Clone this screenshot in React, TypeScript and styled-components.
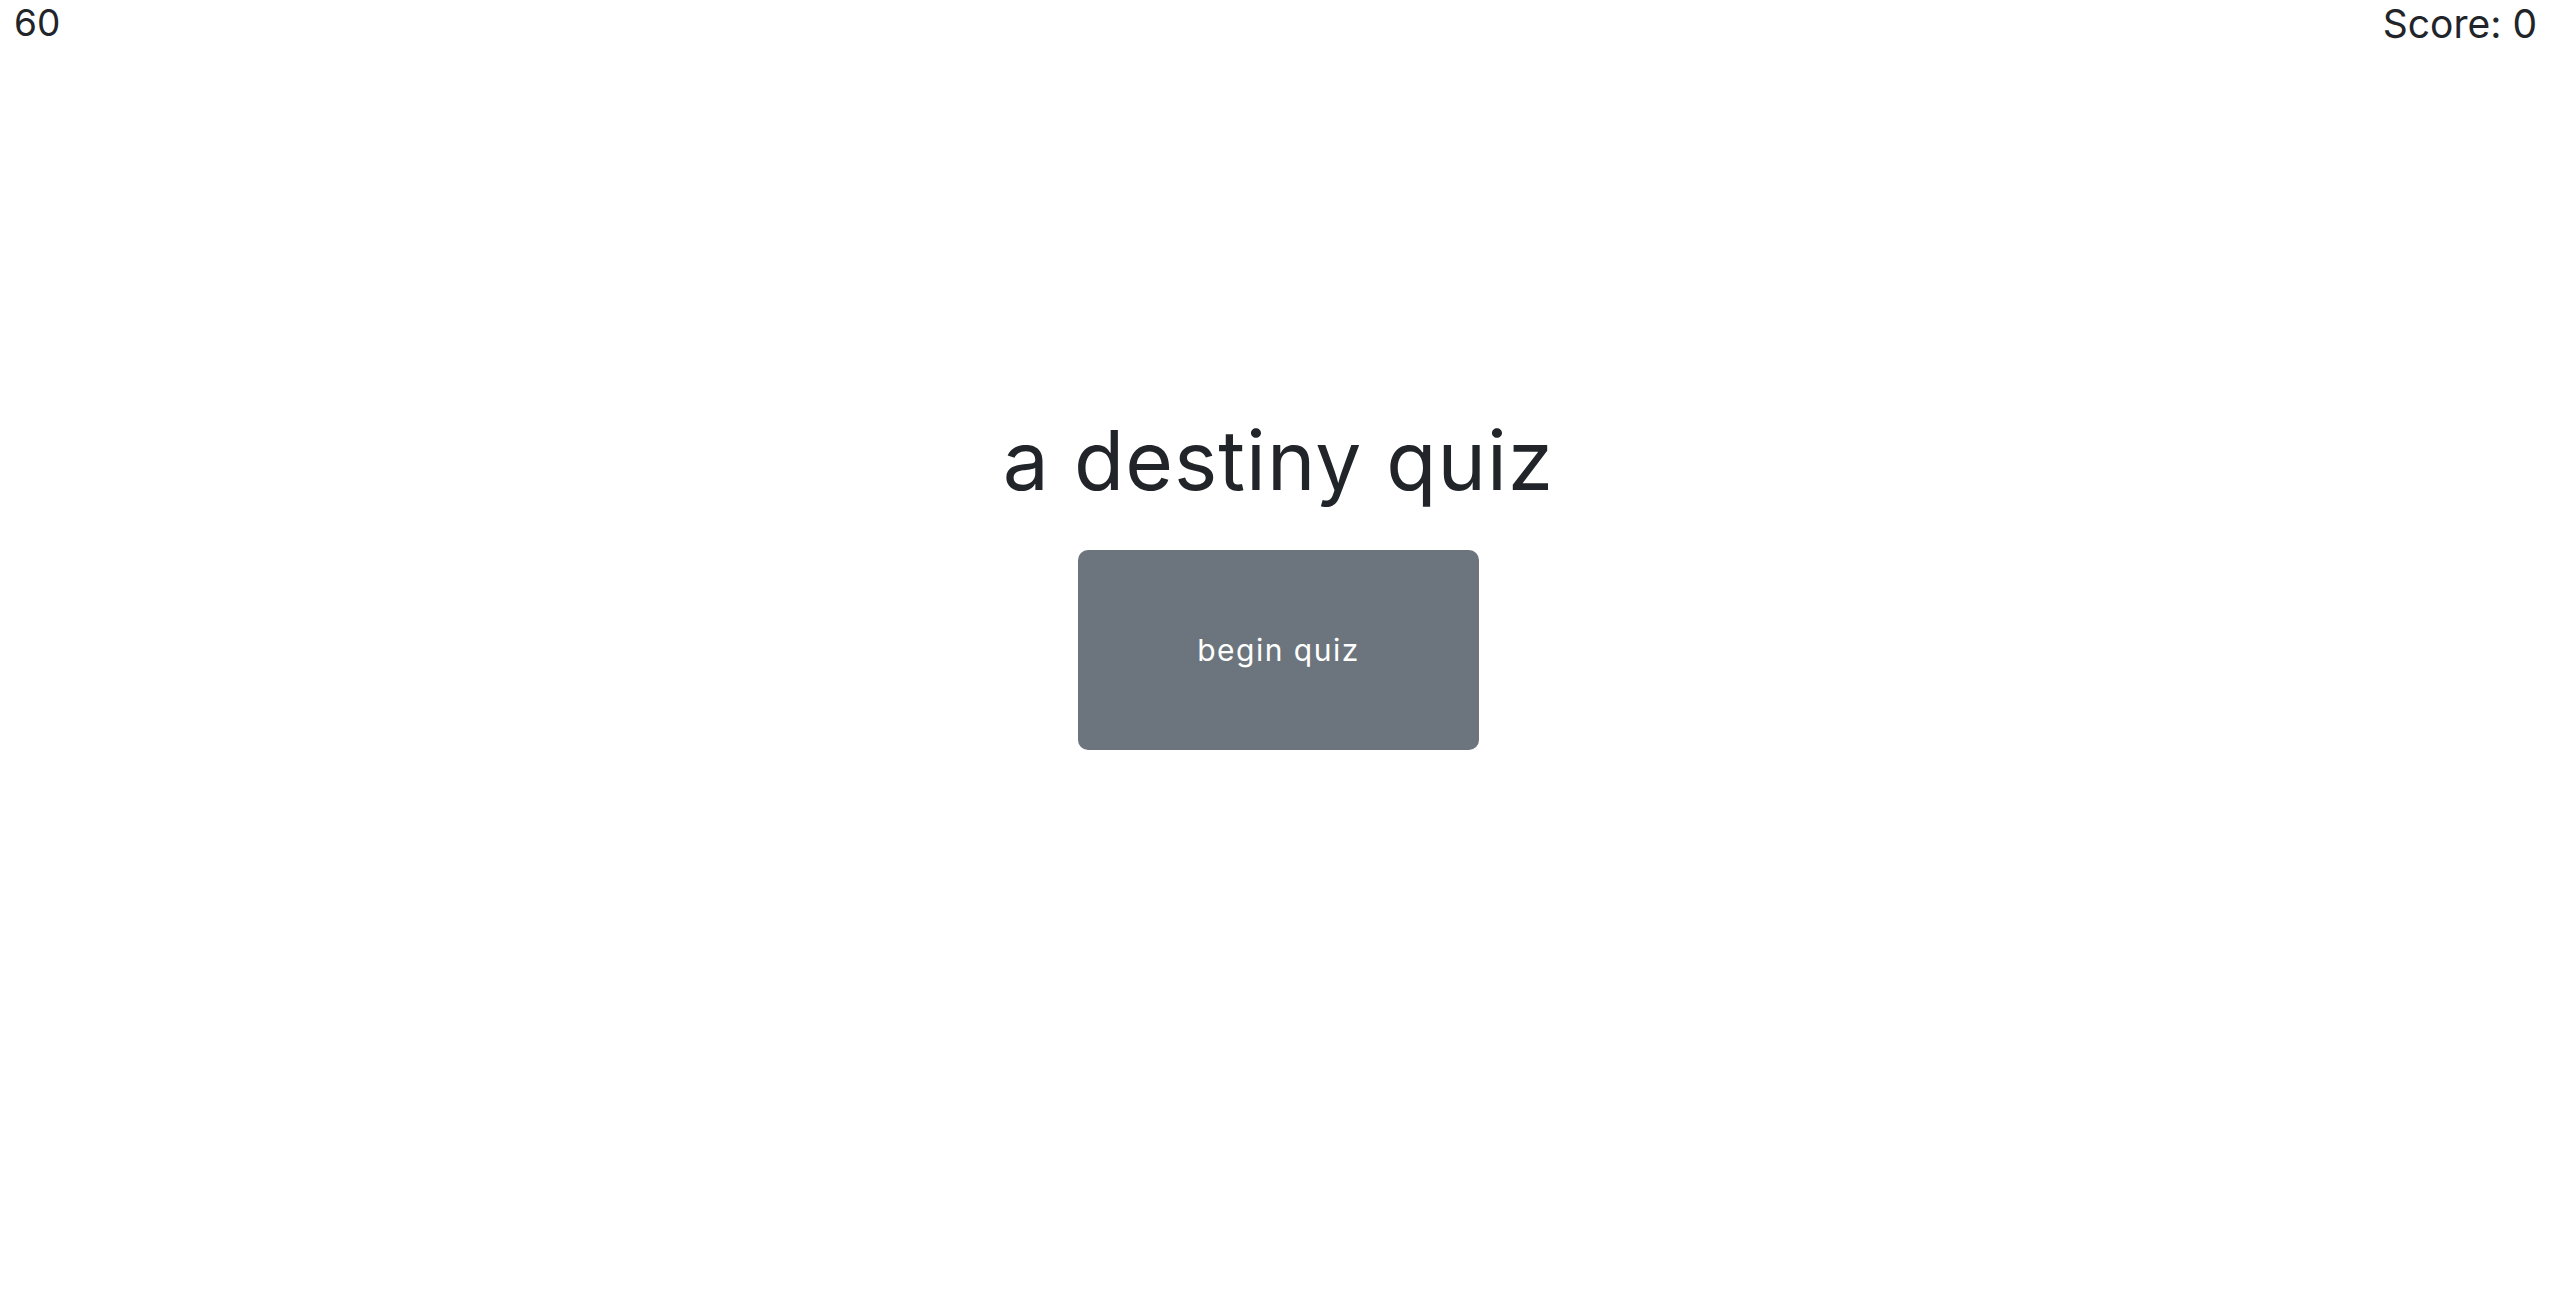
import React from "react";
import styled, { createGlobalStyle } from "styled-components";

const GlobalStyle = createGlobalStyle`
  html, body {
    margin: 0;
    padding: 0;
    background: #ffffff;
  }
  body {
    font-family: Inter, "Noto Sans", "Liberation Sans", sans-serif;
    color: #212529;
  }
`;

const Page = styled.div`
  min-height: 1293px;
  display: flex;
  flex-direction: column;
`;

const TopBar = styled.header`
  display: flex;
  justify-content: space-between;
  align-items: flex-start;
  padding: 0 20px 0 14px;
`;

const Counter = styled.div<{ $size: number }>`
  font-size: ${(p) => p.$size}px;
  font-weight: 400;
  line-height: 1;
  padding-top: 4px;
  color: #212529;
`;

const Main = styled.main`
  display: flex;
  flex-direction: column;
  align-items: center;
  padding-top: 358px;
`;

const Title = styled.h1`
  margin: 0;
  font-size: 82px;
  font-weight: 400;
  line-height: 120px;
  letter-spacing: 1px;
  color: #212529;
`;

const StartButton = styled.button`
  margin-top: 29px;
  width: 401px;
  height: 200px;
  border: none;
  border-radius: 10px;
  background: #6c757d;
  color: #ffffff;
  font-family: Inter, "Noto Sans", "Liberation Sans", sans-serif;
  font-size: 30px;
  font-weight: 400;
  letter-spacing: 1.5px;
  cursor: pointer;
`;

export default function App() {
  return (
    <>
      <GlobalStyle />
      <Page>
        <TopBar>
          <Counter $size={37}>60</Counter>
          <Counter $size={39}>Score: 0</Counter>
        </TopBar>
        <Main>
          <Title>a destiny quiz</Title>
          <StartButton>begin quiz</StartButton>
        </Main>
      </Page>
    </>
  );
}
